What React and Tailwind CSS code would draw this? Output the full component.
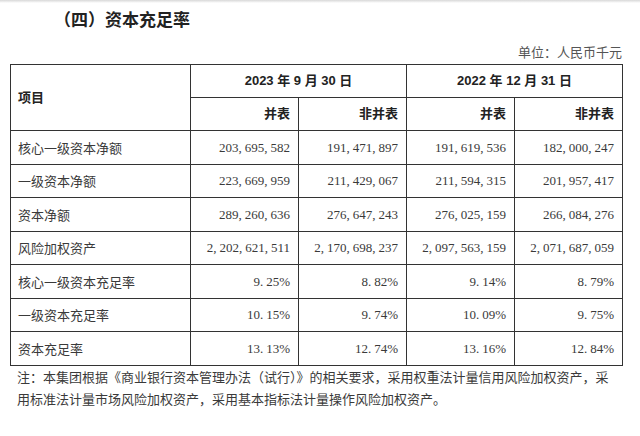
import React from 'react';

const rows = [
  ['核心一级资本净额', '203,695,582', '191,471,897', '191,619,536', '182,000,247'],
  ['一级资本净额', '223,669,959', '211,429,067', '211,594,315', '201,957,417'],
  ['资本净额', '289,260,636', '276,647,243', '276,025,159', '266,084,276'],
  ['风险加权资产', '2,202,621,511', '2,170,698,237', '2,097,563,159', '2,071,687,059'],
  ['核心一级资本充足率', '9.25%', '8.82%', '9.14%', '8.79%'],
  ['一级资本充足率', '10.15%', '9.74%', '10.09%', '9.75%'],
  ['资本充足率', '13.13%', '12.74%', '13.16%', '12.84%'],
];

const cjk = "font-['Noto_Sans_CJK_SC',sans-serif]";
const bold = "font-['Liberation_Sans','Noto_Sans_CJK_SC',sans-serif] font-bold";

// SimSun-style punctuation: comma and dot take a full half-width cell
const Num = ({ value }) => {
  const parts = value.split(/([,.])/);
  return (
    <span>
      {parts.map((p, i) =>
        p === ',' || p === '.' ? (
          <span key={i} className="mr-[3px]">{p}</span>
        ) : (
          <span key={i}>{p}</span>
        )
      )}
    </span>
  );
};

const App = () => {
  return (
    <div className="w-[640px] h-[436px] bg-white overflow-hidden text-[#333]">
      <div className="h-[3px] bg-gradient-to-b from-[#d8d8d8] to-white"></div>

      <div className={`mt-[4px] h-[24px] leading-[24px] pl-[54px] text-[17px] font-bold text-[#222] ${cjk}`}>
        （四）资本充足率
      </div>

      <div className={`mt-[13px] h-[16px] leading-[16px] pr-[18px] text-right text-[13px] text-[#555] ${cjk}`}>
        单位：人民币千元
      </div>

      <table className="mt-[4px] ml-[10px] w-[612px] table-fixed border-collapse border-[1.5px] border-[#333] text-[13px]">
        <colgroup>
          <col className="w-[180px]" />
          <col className="w-[108px]" />
          <col className="w-[108px]" />
          <col className="w-[108px]" />
          <col className="w-[108px]" />
        </colgroup>
        <thead>
          <tr className="h-[33px]">
            <th rowSpan={2} className={`border border-[#333] pl-[7px] text-left text-[#222] ${bold}`}>
              项目
            </th>
            <th colSpan={2} className={`border border-[#333] text-center text-[#222] ${bold}`}>
              2023 年 9 月 30 日
            </th>
            <th colSpan={2} className={`border border-[#333] text-center text-[#222] ${bold}`}>
              2022 年 12 月 31 日
            </th>
          </tr>
          <tr className="h-[33px]">
            {['并表', '非并表', '并表', '非并表'].map((h, i) => (
              <th key={i} className={`border border-[#333] pr-[8px] text-right text-[#222] ${bold}`}>
                {h}
              </th>
            ))}
          </tr>
        </thead>
        <tbody>
          {rows.map((r) => (
            <tr key={r[0]} className="h-[33.5px]">
              <td className={`border border-[#333] pl-[7px] text-[#3a3a3a] ${cjk}`}>{r[0]}</td>
              {r.slice(1).map((v, i) => (
                <td
                  key={i}
                  className="border border-[#333] pr-[8px] text-right text-[#3a3a3a] font-['Liberation_Serif',serif]"
                >
                  <Num value={v} />
                </td>
              ))}
            </tr>
          ))}
        </tbody>
      </table>

      <p className={`mt-0 ml-[17px] w-[605px] text-[13px] leading-[22px] text-[#3a3a3a] ${cjk}`}>
        注：本集团根据《商业银行资本管理办法（试行）》的相关要求，采用权重法计量信用风险加权资产，采
        <br />
        用标准法计量市场风险加权资产，采用基本指标法计量操作风险加权资产。
      </p>
    </div>
  );
};

export default App;
